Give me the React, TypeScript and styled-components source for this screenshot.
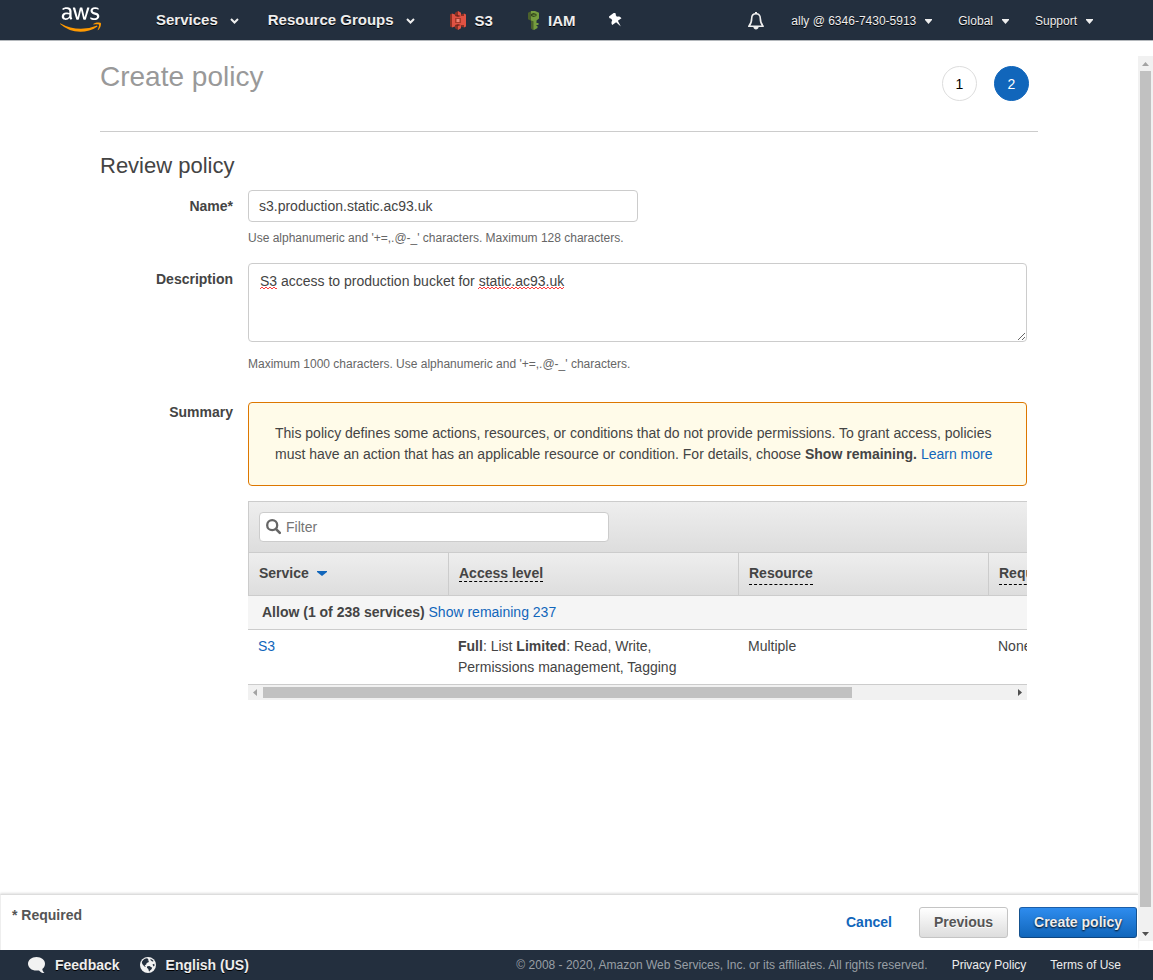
import React from "react";
import styled, { createGlobalStyle, css } from "styled-components";
import { FaAws } from "react-icons/fa";

const NAVY = "#232f3e";
const LINK = "#1166bb";
const LINE = "#cccccc";
const INK = "#444444";

const GlobalStyle = createGlobalStyle`
  *, *::before, *::after { box-sizing: border-box; }
  body {
    margin: 0;
    background: #fff;
    color: ${INK};
    font-family: "Liberation Sans", Arial, Helvetica, sans-serif;
    font-size: 14px;
    line-height: 21px;
  }
  button, input, textarea { font: inherit; color: inherit; margin: 0; }
`;

const Page = styled.div`
  display: flex;
  flex-direction: column;
  min-height: 100vh;
`;

/* ---------- top navigation ---------- */

const TopNav = styled.header`
  display: flex;
  align-items: center;
  justify-content: space-between;
  height: 41px;
  padding: 0 60px;
  background: ${NAVY};
  border-bottom: 1px solid #b4b8bc;
`;

const NavGroup = styled.nav<{ $gap: number; $top?: number }>`
  display: flex;
  align-items: center;
  gap: ${(p) => p.$gap}px;
  padding-top: ${(p) => p.$top ?? 0}px;
`;

const Logo = styled.a`
  display: flex;
  margin-right: 26px;
  padding-bottom: 1px;
  svg { display: block; fill: url(#logo-fill); }
`;

const navText = css`
  color: #eeeeee;
  text-shadow: 0 1px 0 #000;
  white-space: nowrap;
`;

const NavMenu = styled.button<{ $small?: boolean }>`
  ${navText}
  display: flex;
  align-items: center;
  gap: ${(p) => (p.$small ? 9 : 12)}px;
  padding: 0;
  border: 0;
  background: none;
  font-size: ${(p) => (p.$small ? 12 : 15)}px;
  font-weight: ${(p) => (p.$small ? 400 : 700)};
  line-height: 20px;
`;

const Shortcuts = styled.div`
  display: flex;
  align-items: center;
  gap: 34px;
  margin-left: 6px;
`;

const Shortcut = styled.a`
  ${navText}
  display: flex;
  align-items: center;
  gap: 9px;
  font-size: 15px;
  font-weight: 700;
  text-decoration: none;
`;

const IconButton = styled.button`
  display: flex;
  padding: 0;
  border: 0;
  background: none;
  color: #fff;
`;

/* ---------- page body ---------- */

const Body = styled.div`
  display: flex;
  flex: 1;
`;

const Column = styled.div`
  display: flex;
  flex-direction: column;
  flex: 1;
  min-width: 0;
`;

const Main = styled.main`
  flex: 1;
  padding: 0 100px;
`;

const TitleBar = styled.div`
  display: flex;
  justify-content: space-between;
  padding: 19px 9px 30px 0;
  border-bottom: 1px solid ${LINE};
`;

const Title = styled.h1`
  margin: 0;
  color: #999999;
  font-size: 28px;
  font-weight: 400;
  line-height: 34px;
`;

const Steps = styled.div`
  display: flex;
  gap: 17px;
  padding-top: 6px;
`;

const Step = styled.button<{ $active?: boolean }>`
  width: 35px;
  height: 35px;
  padding: 2px 0 0;
  border: 1px solid ${(p) => (p.$active ? LINK : "#dddddd")};
  border-radius: 50%;
  background: ${(p) => (p.$active ? LINK : "#fff")};
  color: ${(p) => (p.$active ? "#fff" : "#000")};
`;

const SectionTitle = styled.h2`
  margin: 20px 0 10px;
  font-size: 22px;
  font-weight: 400;
  line-height: 28px;
`;

const Form = styled.form`
  padding-right: 11px;
`;

const Row = styled.div<{ $after?: number }>`
  display: grid;
  grid-template-columns: 133px minmax(0, 1fr);
  column-gap: 15px;
  margin-bottom: ${(p) => p.$after ?? 0}px;
`;

const labelStyle = css`
  font-weight: 700;
  text-align: right;
`;

const Label = styled.label`
  ${labelStyle}
  padding-top: 6px;
`;

const RowHeading = styled.div`
  ${labelStyle}
`;

const fieldStyle = css`
  display: block;
  border: 1px solid ${LINE};
  border-radius: 4px;
  background: #fff;
  outline: none;
`;

const NameInput = styled.input`
  ${fieldStyle}
  width: 50%;
  min-width: 390px;
  height: 32px;
  padding: 0 10px;
`;

const TextBox = styled.div`
  position: relative;
`;

const Description = styled.textarea`
  ${fieldStyle}
  width: 100%;
  height: 79px;
  padding: 7px 11px;
  resize: both;
`;

const SpellMark = styled.svg<{ $left: number }>`
  position: absolute;
  top: 23px;
  left: ${(p) => p.$left}px;
  pointer-events: none;
`;

const Help = styled.p<{ $gap: number }>`
  margin: ${(p) => p.$gap}px 0 0;
  color: #666666;
  font-size: 12px;
  line-height: 18px;
`;

const Link = styled.a`
  color: ${LINK};
  text-decoration: none;
`;

const Notice = styled.div`
  margin-bottom: 15px;
  padding: 20px 26px;
  border: 1px solid #dd7700;
  border-radius: 4px;
  background: #fffbe9;
`;

/* ---------- summary table ---------- */

const panelFill = css`
  background: linear-gradient(#eeeeee, #dddddd);
`;

const Toolbar = styled.div`
  ${panelFill}
  padding: 10px;
  border: 1px solid ${LINE};
  border-right: 0;
`;

const FilterBox = styled.label`
  ${fieldStyle}
  display: flex;
  align-items: center;
  gap: 5px;
  width: 350px;
  height: 30px;
  padding: 0 6px;
  color: #666666;
`;

const FilterInput = styled.input`
  flex: 1;
  min-width: 0;
  padding: 0;
  border: 0;
  outline: none;
  background: none;
  &::placeholder { color: #757575; opacity: 1; }
`;

const TableScroll = styled.div`
  overflow: hidden;
`;

const Table = styled.table`
  width: 990px;
  table-layout: fixed;
  border-collapse: separate;
  border-spacing: 0;
`;

const HeadRow = styled.tr`
  ${panelFill}
`;

const Head = styled.th<{ $width: number }>`
  width: ${(p) => p.$width}px;
  padding: 10px;
  border-left: 1px solid ${LINE};
  border-bottom: 1px solid ${LINE};
  text-align: left;
  vertical-align: top;
`;

const SortButton = styled.button`
  display: flex;
  align-items: center;
  gap: 8px;
  padding: 0;
  border: 0;
  background: none;
  font-weight: 700;
`;

const Hint = styled.span<{ $block?: boolean }>`
  display: ${(p) => (p.$block ? "inline-block" : "inline")};
  border-bottom: 1px dashed #000;
  vertical-align: top;
`;

const Cell = styled.td<{ $group?: boolean }>`
  padding: 6px ${(p) => (p.$group ? 14 : 10)}px;
  border-bottom: 1px solid ${LINE};
  background: ${(p) => (p.$group ? "#f5f5f5" : "#fff")};
  vertical-align: top;
`;

/* ---------- scroll bars ---------- */

const HBar = styled.div`
  display: flex;
  align-items: center;
  height: 15px;
  background: #f1f1f1;
`;

const HTrack = styled.div`
  flex: 1;
  height: 11px;
`;

const HThumb = styled.div`
  width: calc(100% * 779 / 990);
  height: 11px;
  background: #c1c1c1;
`;

const VBar = styled.div`
  display: flex;
  flex-direction: column;
  align-items: center;
  width: 15px;
  margin: 15px 0 9px;
  background: #f1f1f1;
`;

const VThumb = styled.div`
  flex: 1;
  width: 11px;
  margin-bottom: 19px;
  background: #c1c1c1;
`;

const BarArrow = styled.svg`
  display: block;
  flex: none;
`;

/* ---------- bottom bars ---------- */

const ActionBar = styled.div`
  display: flex;
  align-items: flex-start;
  gap: 11px;
  height: 56px;
  padding: 12px 1px 0 11px;
  border-top: 1px solid #dddddd;
  border-left: 1px solid #eeeeee;
  box-shadow: 0 -1px 2px rgba(0, 0, 0, 0.12);
`;

const Required = styled.strong`
  flex: 1;
  margin-top: -2px;
  color: #555555;
`;

const Button = styled.button<{ $kind: "link" | "plain" | "primary" }>`
  height: 31px;
  padding: 0 14px 2px;
  border: 1px solid transparent;
  border-radius: 3px;
  font-weight: 700;
  line-height: 20px;
  ${(p) =>
    p.$kind === "link" &&
    css`
      padding: 0 15px 2px;
      background: none;
      color: ${LINK};
    `}
  ${(p) =>
    p.$kind === "plain" &&
    css`
      border-color: #c4c4c4;
      background: linear-gradient(#ffffff, #dddddd);
      color: #555555;
      text-shadow: 0 1px 0 #fff;
    `}
  ${(p) =>
    p.$kind === "primary" &&
    css`
      border-color: #1c5ea8 #15528f #0f4680;
      background: linear-gradient(#2e8cee, #1166bb);
      color: #eeeeee;
      text-shadow: 0 1px 2px #000;
    `}
`;

const Footer = styled.footer`
  display: flex;
  align-items: center;
  height: 30px;
  padding: 0 32px 0 28px;
  background: ${NAVY};
  font-size: 12px;
`;

const FooterButton = styled.button`
  ${navText}
  display: flex;
  align-items: center;
  gap: 9px;
  margin-right: 20px;
  padding: 0;
  border: 0;
  background: none;
  font-size: 14px;
  font-weight: 700;
`;

const Copyright = styled.span`
  margin-left: auto;
  color: #999fa5;
`;

const FooterLink = styled.a`
  margin-left: 24px;
  color: #eeeeee;
  text-decoration: none;
`;

/* ---------- drawings ---------- */

const Defs = styled.svg`
  position: absolute;
  width: 0;
  height: 0;
`;

const LogoFill = () => (
  <Defs aria-hidden="true">
    <linearGradient id="logo-fill" x1="0" y1="0" x2="0" y2="1">
      <stop offset="0.6" stopColor="#fff" />
      <stop offset="0.6" stopColor="#f90" />
    </linearGradient>
  </Defs>
);

const Chevron = () => (
  <svg width="9" height="8" viewBox="0 0 9 8" aria-hidden="true">
    <path d="M1 3l3.5 3.5L8 3" fill="none" stroke="#eee" strokeWidth="2" />
  </svg>
);

const Caret = ({ color = "#eee", width = 7 }: { color?: string; width?: number }) => (
  <svg width={width} height="5" viewBox="0 0 8 5" preserveAspectRatio="none" aria-hidden="true">
    <path d="M0 0h8v1L4 5 0 1z" fill={color} />
  </svg>
);

const StorageIcon = () => (
  <svg width="16" height="19" viewBox="0 0 16 19" aria-hidden="true">
    <path d="M0 3.500L2 2.500v14l-2-1z" fill="#8c3123" />
    <path d="M2 2.500l3 1v12l-3 1z" fill="#e05243" />
    <path d="M14 2.500l2 1v12l-2 1z" fill="#e05243" />
    <path d="M14 2.500l-3 1v12l3 1z" fill="#8c3123" />
    <path d="M5 1.800L8 0v19l-3-1.800z" fill="#8c3123" />
    <path d="M8 0l3 1.800v15.400L8 19z" fill="#e05243" />
    <path d="M2 5h12v9H2z" fill="#e05243" />
    <path d="M5 5l3 .8 3-.8-3-.8zM5 14l3-.8 3 .8-3 .8z" fill="#5e1f18" />
    <path d="M5 7h6v5H5z" fill="#a63a2b" />
    <path d="M6.500 8h3v3h-3z" fill="#ef8478" />
  </svg>
);

const KeyIcon = () => (
  <svg width="12" height="19" viewBox="0 0 12 19" aria-hidden="true">
    <path d="M4.500 0L1 1.800v6.400L4.500 10z" fill="#4b612c" />
    <path d="M4 0h4l4 1.800v5.700l-2.500 2V12h2v2H9.500v1h1v2L7 19l-2-1V10.500H4z" fill="#759c3e" />
    <path d="M4 9.500l2.500.8V19L4 17.500z" fill="#4b612c" />
    <path d="M4 3l2.500-1 3 1v2L6.500 6 4 5z" fill="#33461b" />
    <path d="M5.500 3.500h3V5h-3z" fill="#5f8034" />
  </svg>
);

const PinIcon = () => (
  <svg width="14" height="15" viewBox="0 0 14 15" aria-hidden="true">
    <path
      transform="rotate(-37 7 7)"
      d="M3 0h7.500v2.500H9.700V5c1.700.6 2.800 1.800 2.800 3.800H8L7 15 5.800 8.800H1c0-2 1.100-3.200 2.800-3.800V2.500H3z"
      fill="#fff"
    />
  </svg>
);

const BellIcon = () => (
  <svg width="17" height="18" viewBox="0 0 17 18" aria-hidden="true">
    <path
      d="M8 1.800c-2.900 0-4.300 1.700-4.300 4.400 0 4.300-.8 5.800-2.900 8.100h14.400c-2.100-2.300-2.900-3.800-2.900-8.100 0-2.700-1.400-4.400-4.300-4.400z"
      fill="none"
      stroke="#eee"
      strokeWidth="1.600"
      strokeLinejoin="round"
    />
    <path d="M5.300 14.800h5.400C10.400 16.500 9.400 17.400 8 17.400s-2.400-.9-2.700-2.600zM7 0h2v2H7z" fill="#eee" />
  </svg>
);

const SearchIcon = () => (
  <svg width="15" height="17" viewBox="0 0 15 17" aria-hidden="true">
    <circle cx="6.200" cy="6.200" r="5" fill="none" stroke="#666" strokeWidth="2.300" />
    <path d="M9.800 9.800l4 4" stroke="#666" strokeWidth="2.600" strokeLinecap="round" />
  </svg>
);

const BubbleIcon = () => (
  <svg width="18" height="17" viewBox="0 0 18 17" aria-hidden="true">
    <path
      d="M8.500 0C13.500 0 17 3 17 6.700c0 2.200-1 4-2.700 5.200.2 1.700 1 3 2.200 4.100-2.300 0-4.200-.9-5.500-2.600-.8.200-1.600.2-2.500.2C3.500 13.600 0 10.500 0 6.800S3.500 0 8.500 0z"
      fill="#f2f2f2"
    />
  </svg>
);

const GlobeIcon = () => (
  <svg width="17" height="16" viewBox="0 0 17 16" aria-hidden="true">
    <circle cx="8" cy="8" r="8" fill="#f2f2f2" />
    <path
      d="M3 3.300C4 2.100 5.500 1.400 7 1.300l1.500.9-.8 1 1.300.5-.5 1.600-1.800.8-.6 1.600-1.500.2 1.300 1.900-1.500-.4L2.300 7 1.800 5z"
      fill={NAVY}
    />
    <path d="M10.300 1.700l2.400 1.300.9 1.300-1.400.3-1.500-1.300z" fill={NAVY} />
    <path d="M7.200 9.200l2.200-.3 2.800 1.900-.7 1.500-1.500 1.100-.9 1.400-.8-2.800-1.400-1.300z" fill={NAVY} />
    <path d="M12.500 7.500l1.800-.7.200 1.900-1 .9z" fill={NAVY} />
  </svg>
);

const Squiggle = ({ left, width, id }: { left: number; width: number; id: string }) => (
  <SpellMark $left={left} width={width} height="4" aria-hidden="true">
    <pattern id={id} width="4" height="4" patternUnits="userSpaceOnUse">
      <path d="M0 3l2-2 2 2" fill="none" stroke="#ff3b3b" strokeWidth="1" />
    </pattern>
    <rect width={width} height="4" fill={`url(#${id})`} />
  </SpellMark>
);

const arrowPaths = {
  up: "M4 10l3.500-4L11 10z",
  down: "M4 6h7l-3.500 4z",
  left: "M9 4v7L5 7.500z",
  right: "M6 4v7l4-3.500z",
};

const Arrow = ({ to, dim }: { to: keyof typeof arrowPaths; dim?: boolean }) => (
  <BarArrow width="15" height="15" viewBox="0 0 15 15" aria-hidden="true">
    <path d={arrowPaths[to]} fill={dim ? "#a3a3a3" : "#505050"} />
  </BarArrow>
);

export default function App() {
  return (
    <Page>
      <GlobalStyle />
      <LogoFill />
      <TopNav>
        <NavGroup $gap={29}>
          <Logo href="#home" aria-label="AWS home">
            <FaAws size={41} />
          </Logo>
          <NavMenu type="button">
            Services
            <Chevron />
          </NavMenu>
          <NavMenu type="button">
            Resource Groups
            <Chevron />
          </NavMenu>
          <Shortcuts>
            <Shortcut href="#s3">
              <StorageIcon />
              S3
            </Shortcut>
            <Shortcut href="#iam">
              <KeyIcon />
              IAM
            </Shortcut>
            <IconButton type="button" aria-label="Pin shortcuts">
              <PinIcon />
            </IconButton>
          </Shortcuts>
        </NavGroup>
        <NavGroup $gap={26} $top={2}>
          <IconButton type="button" aria-label="Notifications">
            <BellIcon />
          </IconButton>
          <NavMenu type="button" $small>
            ally @ 6346-7430-5913
            <Caret />
          </NavMenu>
          <NavMenu type="button" $small>
            Global
            <Caret />
          </NavMenu>
          <NavMenu type="button" $small>
            Support
            <Caret />
          </NavMenu>
        </NavGroup>
      </TopNav>

      <Body>
        <Column>
          <Main>
            <TitleBar>
              <Title>Create policy</Title>
              <Steps>
                <Step type="button">1</Step>
                <Step type="button" $active>
                  2
                </Step>
              </Steps>
            </TitleBar>

            <SectionTitle>Review policy</SectionTitle>

            <Form>
              <Row $after={16}>
                <Label htmlFor="policy-name">Name*</Label>
                <div>
                  <NameInput id="policy-name" type="text" defaultValue="s3.production.static.ac93.uk" />
                  <Help $gap={7}>Use alphanumeric and '+=,.@-_' characters. Maximum 128 characters.</Help>
                </div>
              </Row>

              <Row $after={29}>
                <Label htmlFor="policy-description">Description</Label>
                <div>
                  <TextBox>
                    <Description
                      id="policy-description"
                      spellCheck={false}
                      defaultValue="S3 access to production bucket for static.ac93.uk"
                    />
                    <Squiggle id="mark-a" left={12} width={17} />
                    <Squiggle id="mark-b" left={230} width={86} />
                  </TextBox>
                  <Help $gap={13}>Maximum 1000 characters. Use alphanumeric and '+=,.@-_' characters.</Help>
                </div>
              </Row>

              <Row>
                <RowHeading>Summary</RowHeading>
                <div>
                  <Notice>
                    This policy defines some actions, resources, or conditions that do not provide permissions. To grant
                    access, policies must have an action that has an applicable resource or condition. For details,
                    choose <b>Show remaining.</b> <Link href="#learn">Learn more</Link>
                  </Notice>

                  <Toolbar>
                    <FilterBox>
                      <SearchIcon />
                      <FilterInput type="text" placeholder="Filter" aria-label="Filter" />
                    </FilterBox>
                  </Toolbar>
                  <TableScroll>
                    <Table>
                      <thead>
                        <HeadRow>
                          <Head $width={200}>
                            <SortButton type="button">
                              Service
                              <Caret color={LINK} width={10} />
                            </SortButton>
                          </Head>
                          <Head $width={290}>
                            <Hint>Access level</Hint>
                          </Head>
                          <Head $width={250}>
                            <Hint $block>Resource</Hint>
                          </Head>
                          <Head $width={250}>
                            <Hint $block>Request condition</Hint>
                          </Head>
                        </HeadRow>
                      </thead>
                      <tbody>
                        <tr>
                          <Cell colSpan={4} $group>
                            <b>Allow (1 of 238 services)</b> <Link href="#remaining">Show remaining 237</Link>
                          </Cell>
                        </tr>
                        <tr>
                          <Cell>
                            <Link href="#service-s3">S3</Link>
                          </Cell>
                          <Cell>
                            <b>Full</b>: List <b>Limited</b>: Read, Write, Permissions management, Tagging
                          </Cell>
                          <Cell>Multiple</Cell>
                          <Cell>None</Cell>
                        </tr>
                      </tbody>
                    </Table>
                  </TableScroll>
                  <HBar>
                    <Arrow to="left" dim />
                    <HTrack>
                      <HThumb />
                    </HTrack>
                    <Arrow to="right" />
                  </HBar>
                </div>
              </Row>
            </Form>
          </Main>

          <ActionBar>
            <Required>* Required</Required>
            <Button type="button" $kind="link">
              Cancel
            </Button>
            <Button type="button" $kind="plain">
              Previous
            </Button>
            <Button type="button" $kind="primary">
              Create policy
            </Button>
          </ActionBar>
        </Column>
        <VBar>
          <Arrow to="up" dim />
          <VThumb />
          <Arrow to="down" />
        </VBar>
      </Body>

      <Footer>
        <FooterButton type="button">
          <BubbleIcon />
          Feedback
        </FooterButton>
        <FooterButton type="button">
          <GlobeIcon />
          English (US)
        </FooterButton>
        <Copyright>© 2008 - 2020, Amazon Web Services, Inc. or its affiliates. All rights reserved.</Copyright>
        <FooterLink href="#privacy">Privacy Policy</FooterLink>
        <FooterLink href="#terms">Terms of Use</FooterLink>
      </Footer>
    </Page>
  );
}
